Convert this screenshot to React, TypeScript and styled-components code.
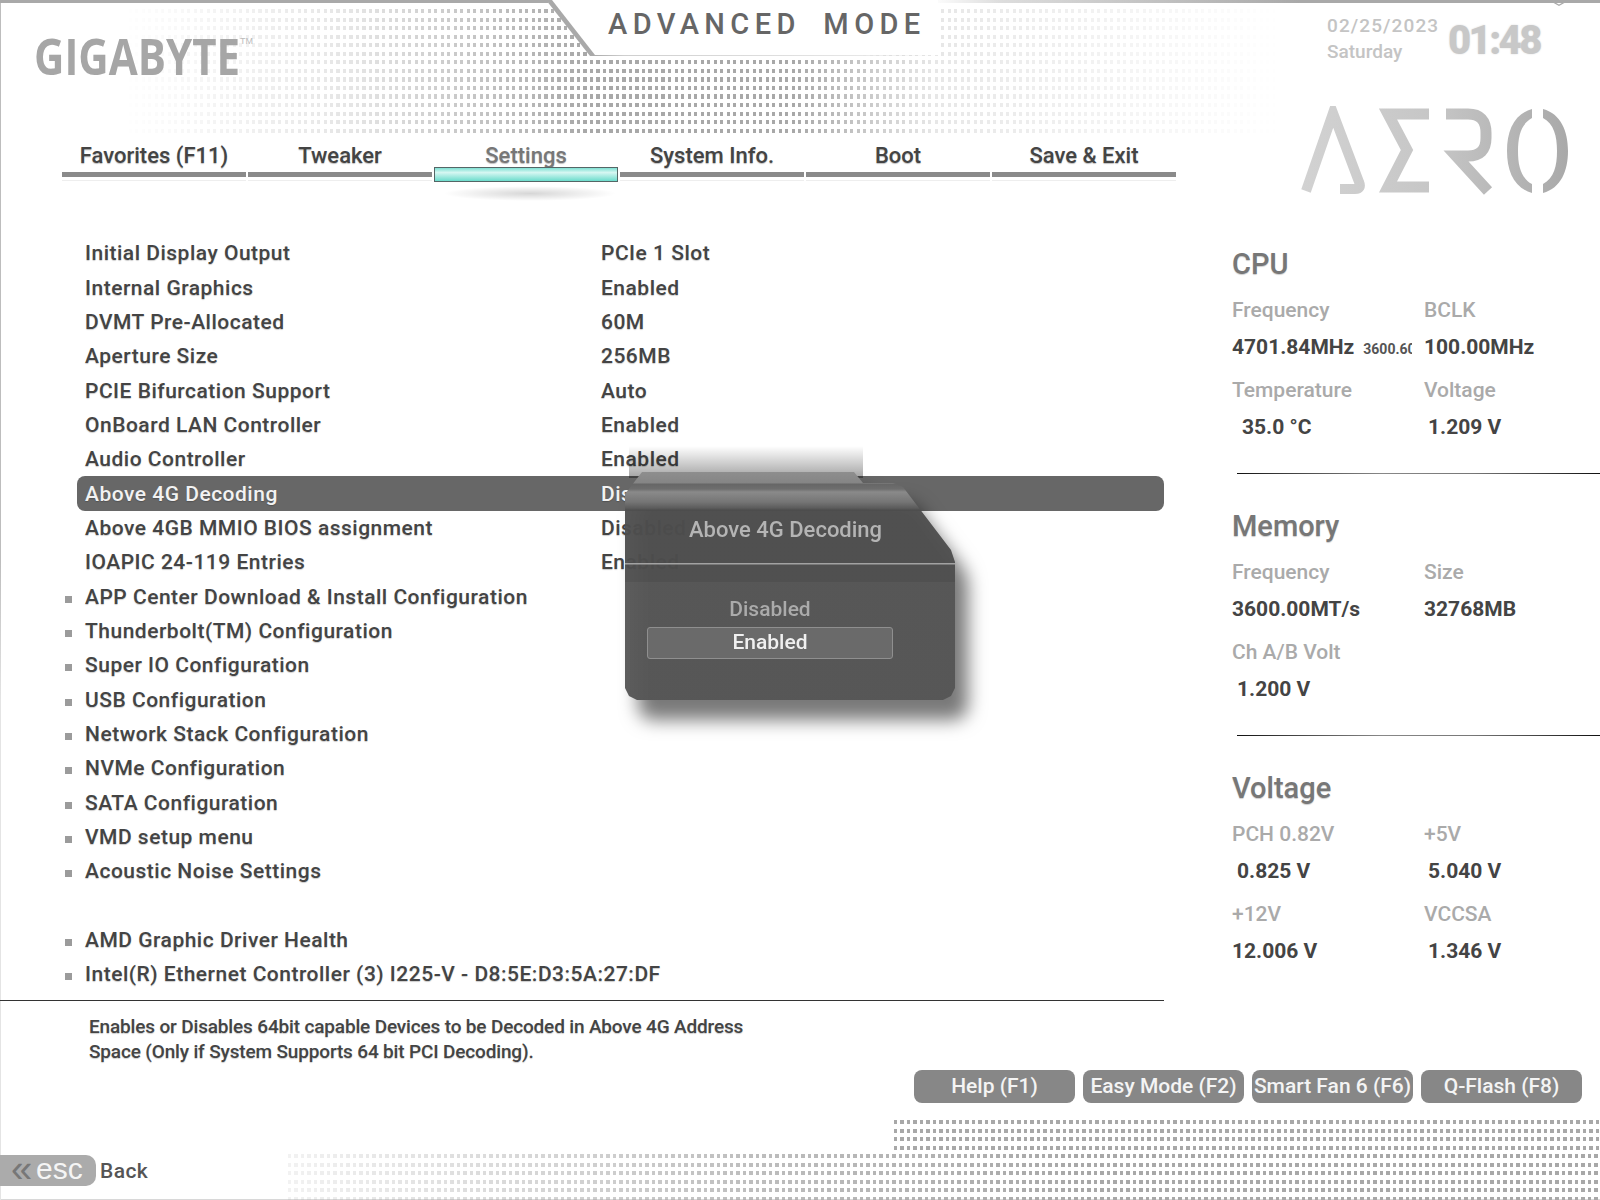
import React from 'react';
import styled, {createGlobalStyle} from 'styled-components';

const TABS = ['Favorites (F11)', 'Tweaker', 'Settings', 'System Info.', 'Boot', 'Save & Exit'];

const ROWS = [
    {label: 'Initial Display Output', value: 'PCIe 1 Slot'},
    {label: 'Internal Graphics', value: 'Enabled'},
    {label: 'DVMT Pre-Allocated', value: '60M'},
    {label: 'Aperture Size', value: '256MB'},
    {label: 'PCIE Bifurcation Support', value: 'Auto'},
    {label: 'OnBoard LAN Controller', value: 'Enabled'},
    {label: 'Audio Controller', value: 'Enabled'},
    {label: 'Above 4G Decoding', value: 'Disabled', active: true},
    {label: 'Above 4GB MMIO BIOS assignment', value: 'Disabled'},
    {label: 'IOAPIC 24-119 Entries', value: 'Enabled'},
    {label: 'APP Center Download & Install Configuration', sub: true},
    {label: 'Thunderbolt(TM) Configuration', sub: true},
    {label: 'Super IO Configuration', sub: true},
    {label: 'USB Configuration', sub: true},
    {label: 'Network Stack Configuration', sub: true},
    {label: 'NVMe Configuration', sub: true},
    {label: 'SATA Configuration', sub: true},
    {label: 'VMD setup menu', sub: true},
    {label: 'Acoustic Noise Settings', sub: true},
    {label: ''},
    {label: 'AMD Graphic Driver Health', sub: true},
    {label: 'Intel(R) Ethernet Controller (3) I225-V - D8:5E:D3:5A:27:DF', sub: true},
];

type Stat = {label: string, value: string, indent?: number, extra?: string};

const SECTIONS: {title: string, stats: Stat[]}[] = [
    {
        title: 'CPU',
        stats: [
            {label: 'Frequency', value: '4701.84MHz', extra: '3600.60'},
            {label: 'BCLK', value: '100.00MHz'},
            {label: 'Temperature', value: '35.0 °C', indent: 10},
            {label: 'Voltage', value: '1.209 V', indent: 4},
        ],
    },
    {
        title: 'Memory',
        stats: [
            {label: 'Frequency', value: '3600.00MT/s'},
            {label: 'Size', value: '32768MB'},
            {label: 'Ch A/B Volt', value: '1.200 V', indent: 5},
        ],
    },
    {
        title: 'Voltage',
        stats: [
            {label: 'PCH 0.82V', value: '0.825 V', indent: 5},
            {label: '+5V', value: '5.040 V', indent: 4},
            {label: '+12V', value: '12.006 V'},
            {label: 'VCCSA', value: '1.346 V', indent: 4},
        ],
    },
];

const BUTTONS = ['Help (F1)', 'Easy Mode (F2)', 'Smart Fan 6 (F6)', 'Q-Flash (F8)'];

function AeroLogo() {
    return (
        <AeroSvg viewBox="0 0 268 90" width="268" height="90">
            <defs>
                <linearGradient id="aeroFill" x1="0" x2="268" y1="0" y2="0" gradientUnits="userSpaceOnUse">
                    <stop offset="0" stopColor="#d2d2d2"/>
                    <stop offset="0.5" stopColor="#c6c6c6"/>
                    <stop offset="1" stopColor="#a9a9a9"/>
                </linearGradient>
            </defs>
            <g fill="none" stroke="url(#aeroFill)" strokeWidth="10">
                <path d="M6 85 L33 7 L59 76 Q62 83 55 83 L40 83"/>
                <path strokeWidth="11" d="M129 8 H88 L107 44 L88 81 H129"/>
                <path strokeWidth="11" d="M146 8 H168 Q186 8 186 27 V32 Q186 50 168 50 H156 L188 85"/>
            </g>
            <path fill="url(#aeroFill)" d="M232 3 C214 8 207 25 207 45 C207 65 214 82 232 87 L232 78 C221 72 218 60 218 45 C218 30 221 18 232 12 Z"/>
            <path fill="url(#aeroFill)" d="M243 3 C261 8 268 25 268 45 C268 65 261 82 243 87 L243 78 C254 72 257 60 257 45 C257 30 254 18 243 12 Z"/>
        </AeroSvg>
    );
}

function DecodingPopup() {
    return (
        <PopupWrap>
            <PopupGlow/>
            <PopupShadow>
                <PopupPanel>
                    <PopupTitle>Above 4G Decoding</PopupTitle>
                    <PopupOption>Disabled</PopupOption>
                    <PopupOption $selected>Enabled</PopupOption>
                </PopupPanel>
            </PopupShadow>
        </PopupWrap>
    );
}

export default function App() {
    return (
        <Page>
            <GlobalStyle/>
            <HeaderDots/>
            <FooterDots/>
            <FooterDotsTall/>
            <CornerMark viewBox="0 0 12 12" width="12" height="12">
                <path d="M6 .8 L10.8 3.4 V8.6 L6 11.2 L1.2 8.6 V3.4 Z" fill="none" stroke="#aaa" strokeWidth="1.2"/>
            </CornerMark>
            <Upper>
                <Main>
                    <LogoRow>
                        <LogoCell>
                            <Logo>GIGABYTE</Logo>
                            <LogoMark>TM</LogoMark>
                        </LogoCell>
                        <TitleNotch><TitleText>ADVANCED MODE</TitleText></TitleNotch>
                    </LogoRow>
                    <Tabs>
                        {TABS.map(tab => (
                            <Tab key={tab}>
                                <TabLabel $active={tab === 'Settings'}>{tab}</TabLabel>
                                <TabBar $active={tab === 'Settings'}/>
                            </Tab>
                        ))}
                    </Tabs>
                    <SettingList>
                        {ROWS.map((row, index) => (
                            <Row key={index} $active={row.active}>
                                <RowLabel>{row.sub && <Bullet/>}{row.label}</RowLabel>
                                <span>{row.value}</span>
                            </Row>
                        ))}
                    </SettingList>
                </Main>
                <Side>
                    <ClockRow>
                        <DateCol>
                            <DateText>02/25/2023</DateText>
                            <span>Saturday</span>
                        </DateCol>
                        <Time>01:48</Time>
                    </ClockRow>
                    <AeroLogo/>
                    {SECTIONS.map(section => (
                        <Section key={section.title}>
                            <SectionTitle>{section.title}</SectionTitle>
                            <StatGrid>
                                {section.stats.map(stat => (
                                    <StatCell key={stat.label}>
                                        <StatLabel>{stat.label}</StatLabel>
                                        <StatValue $indent={stat.indent}>
                                            {stat.value}
                                            {stat.extra && <StatExtra>{stat.extra}</StatExtra>}
                                        </StatValue>
                                    </StatCell>
                                ))}
                            </StatGrid>
                            {section.title !== 'Voltage' && <Divider/>}
                        </Section>
                    ))}
                </Side>
            </Upper>
            <Rule/>
            <HelpText>
                Enables or Disables 64bit capable Devices to be Decoded in Above 4G Address<br/>
                Space (Only if System Supports 64 bit PCI Decoding).
            </HelpText>
            <ButtonRow>
                {BUTTONS.map(label => <ActionButton key={label}>{label}</ActionButton>)}
            </ButtonRow>
            <Footer>
                <EscKey><EscArrows>«</EscArrows>esc</EscKey>
                <BackLabel>Back</BackLabel>
            </Footer>
            <DecodingPopup/>
        </Page>
    );
}

const GlobalStyle = createGlobalStyle`
  html, body {
    margin: 0;
    background: #fff;
  }

  body {
    font-family: Roboto, "Liberation Sans", sans-serif;
  }
`;

// small square dots, cut out of a flat grey; the last layer fades the whole field
const dotField = (fade: string) => `
  background: #a8a8a8;
  mask-image:
    repeating-linear-gradient(to right, #000 0 3.2px, transparent 3.2px 6.5px),
    repeating-linear-gradient(to bottom, #000 0 4.2px, transparent 4.2px 8.55px),
    ${fade};
  mask-composite: intersect;
`;

const Page = styled.div`
  position: relative;
  width: 1600px;
  height: 1200px;
  overflow: hidden;
  background:
    linear-gradient(to right, #a9a9a9 0, #a9a9a9 548px, transparent 548px, transparent 930px, #ddd 1000px, #a9a9a9 1300px) 0 0 / 100% 3px no-repeat,
    linear-gradient(to bottom, #bdbdbd 0, #bdbdbd 560px, #e4e4e4 700px, #e4e4e4 1200px) 0 0 / 1px 100% no-repeat,
    linear-gradient(#d8d8d8, #d8d8d8) 0 100% / 100% 1px no-repeat,
    #fff;
`;

const CornerMark = styled.svg`
  position: absolute;
  left: 1553px;
  top: -6px;
`;

const HeaderDots = styled.div`
  position: absolute;
  left: 122px;
  top: 9px;
  width: 1160px;
  height: 125px;
  ${dotField('linear-gradient(to right, transparent 0, rgba(0, 0, 0, .12) 8%, rgba(0, 0, 0, .3) 20%, #000 40%, #000 58%, rgba(0, 0, 0, .28) 70%, rgba(0, 0, 0, .14) 85%, transparent 100%)')}
`;

const FooterDots = styled.div`
  position: absolute;
  left: 288px;
  top: 1154px;
  width: 1312px;
  height: 46px;
  ${dotField('linear-gradient(to right, rgba(0, 0, 0, .15) 0, rgba(0, 0, 0, .75) 35%, #000 60%)')}
`;

const FooterDotsTall = styled.div`
  position: absolute;
  left: 894px;
  top: 1120px;
  width: 706px;
  height: 34px;
  ${dotField('linear-gradient(#000, #000)')}
`;

const Upper = styled.div`
  position: relative;
  display: grid;
  grid-template-columns: 1190px 1fr;
  height: 1000px;
`;

const Main = styled.div`
  display: flex;
  flex-direction: column;
`;

const LogoRow = styled.div`
  display: flex;
  align-items: flex-start;
  height: 140px;
`;

const LogoCell = styled.div`
  display: flex;
  align-items: flex-start;
  width: 546px;
  padding: 28px 0 0 34px;
  box-sizing: border-box;
`;

const Logo = styled.div`
  width: 204px;
  transform: scaleX(.84);
  transform-origin: left center;
  font-family: "Open Sans", sans-serif;
  font-size: 50px;
  line-height: 56px;
  font-weight: 700;
  color: #a6a6a6;
  white-space: nowrap;
`;

const LogoMark = styled.span`
  margin: 8px 0 0 2px;
  font-family: "Liberation Sans", sans-serif;
  font-size: 9px;
  line-height: 10px;
  color: #bbb;
`;

const TitleNotch = styled.div`
  position: relative;
  width: 392px;
  height: 56px;
  background: linear-gradient(to right, #a9a9a9 0, #a9a9a9 12%, #cfcfcf 20%, #e6e6e6 80%, transparent 100%);
  clip-path: polygon(0 0, 100% 0, 100% 100%, 44px 100%);

  &::after {
    content: '';
    position: absolute;
    inset: 0 0 1px 0;
    background: #fff;
    clip-path: polygon(6px 0, 100% 0, 100% 100%, 49px 100%);
  }
`;

const TitleText = styled.div`
  position: relative;
  z-index: 1;
  padding: 5px 0 0 62px;
  font-size: 29px;
  line-height: 38px;
  letter-spacing: 5.4px;
  word-spacing: 10px;
  font-weight: 500;
  color: #666;
  white-space: nowrap;
`;

const Tabs = styled.div`
  display: grid;
  grid-template-columns: repeat(6, 184px);
  column-gap: 2px;
  margin-left: 62px;
  height: 42px;
`;

const Tab = styled.div`
  display: flex;
  flex-direction: column;
`;

const TabLabel = styled.div<{$active?: boolean}>`
  height: 32px;
  font-size: 22px;
  line-height: 32px;
  font-weight: 500;
  text-align: center;
  color: ${({$active}) => ($active ? '#777' : '#444')};
  text-shadow: 0 1px 1px rgba(0, 0, 0, .25);
`;

const TabBar = styled.div<{$active?: boolean}>`
  position: relative;
  box-sizing: border-box;
  height: ${({$active}) => ($active ? '15px' : '5px')};
  margin-top: ${({$active}) => ($active ? '-5px' : '0')};
  background: ${({$active}) => ($active ? 'linear-gradient(to bottom, #7fe0d3 0, #d6f7f2 35%, #6cdccc 100%)' : '#8a8a8a')};
  border: ${({$active}) => ($active ? '1.5px solid #566' : 'none')};
  box-shadow: ${({$active}) => ($active ? 'none' : '0 3px 0 #fff, 0 4px 0 #eee')};

  &::after {
    content: ${({$active}) => ($active ? "''" : 'none')};
    position: absolute;
    left: 8px;
    right: 0;
    top: 18px;
    height: 15px;
    background: radial-gradient(ellipse at center, rgba(0, 0, 0, .16) 0, transparent 70%);
  }
`;

const SettingList = styled.div`
  display: grid;
  grid-auto-rows: 34.35px;
  margin-top: 54px;
  margin-left: 77px;
  width: 1087px;
`;

const Row = styled.div<{$active?: boolean}>`
  display: grid;
  grid-template-columns: 516px 1fr;
  align-items: center;
  padding-left: 8px;
  border-radius: 8px;
  font-size: 21px;
  letter-spacing: .5px;
  font-weight: 500;
  color: ${({$active}) => ($active ? '#f2f2f2' : '#444')};
  background: ${({$active}) => ($active ? '#676767' : 'transparent')};
  text-shadow: 0 1px 1px rgba(0, 0, 0, .2);
`;

const RowLabel = styled.span`
  white-space: nowrap;
`;

const Bullet = styled.i`
  display: inline-block;
  width: 7px;
  height: 7px;
  margin: 0 13px 0 -20px;
  vertical-align: 1px;
  background: #9b9b9b;
`;

const Side = styled.div`
  display: flex;
  flex-direction: column;
  padding-top: 13px;
`;

const ClockRow = styled.div`
  display: flex;
  height: 50px;
  padding-left: 137px;
  color: #c4c4c4;
`;

const DateCol = styled.div`
  display: flex;
  flex-direction: column;
  width: 121px;
  font-size: 19px;
  line-height: 26px;
  font-weight: 500;
`;

const DateText = styled.span`
  letter-spacing: 1.1px;
`;

const Time = styled.div`
  padding-top: 3px;
  font-size: 40px;
  line-height: 50px;
  font-weight: 900;
  letter-spacing: -2.6px;
  color: #c8c8c8;
  text-shadow: 0 0 2px rgba(0, 0, 0, .15);
`;

const AeroSvg = styled.svg`
  margin: 43px 0 49px 110px;
  flex: none;
`;

const Section = styled.section`
  display: flex;
  flex-direction: column;
  height: 262px;
  padding-left: 42px;
`;

const SectionTitle = styled.h2`
  margin: 0 0 9px;
  height: 36px;
  padding-top: 1px;
  box-sizing: content-box;
  font-size: 29px;
  line-height: 36px;
  font-weight: 500;
  color: #777;
  text-shadow: 0 1px 1px rgba(0, 0, 0, .2);
`;

const StatGrid = styled.div`
  display: grid;
  grid-template-columns: 192px 1fr;
  grid-auto-rows: 76px;
  row-gap: 4px;
  height: 156px;
`;

const StatCell = styled.div`
  display: flex;
  flex-direction: column;
`;

const StatLabel = styled.div`
  height: 38px;
  font-size: 21px;
  line-height: 38px;
  font-weight: 500;
  color: #aaa;
`;

const StatValue = styled.div<{$indent?: number}>`
  display: flex;
  align-items: baseline;
  height: 37px;
  padding-left: ${({$indent}) => $indent ?? 0}px;
  font-size: 21px;
  line-height: 37px;
  font-weight: 700;
  color: #444;
  white-space: nowrap;
`;

const StatExtra = styled.span`
  display: inline-block;
  width: 49px;
  margin-left: 9px;
  overflow: hidden;
  font-size: 14px;
  color: #555;
`;

const Divider = styled.div`
  height: 1px;
  margin: 26px 0 0 5px;
  background: linear-gradient(to right, #111 0, #333 10%, #888 40%, #777 65%, #111 100%);
`;

const Rule = styled.div`
  width: 1164px;
  height: 1px;
  background: #333;
`;

const HelpText = styled.div`
  margin-top: 13px;
  padding-left: 89px;
  font-size: 19px;
  line-height: 25px;
  letter-spacing: -.16px;
  font-weight: 500;
  color: #444;
  text-shadow: 0 1px 1px rgba(0, 0, 0, .2);
`;

const ButtonRow = styled.div`
  position: relative;
  display: flex;
  justify-content: flex-end;
  gap: 8px;
  margin-top: 6px;
  padding-right: 18px;
`;

const ActionButton = styled.div`
  width: 161px;
  height: 33px;
  overflow: hidden;
  border-radius: 8px;
  background: #878787;
  color: #f4f4f4;
  font-size: 21px;
  line-height: 33px;
  font-weight: 500;
  text-align: center;
  white-space: nowrap;
`;

const Footer = styled.div`
  position: relative;
  display: flex;
  align-items: center;
  gap: 4px;
  margin-top: 52px;
`;

const EscKey = styled.div`
  display: flex;
  align-items: center;
  width: 96px;
  height: 31px;
  box-sizing: border-box;
  padding: 0 0 4px 11px;
  border-radius: 0 10px 10px 0;
  background: #ababab;
  color: #f5f5f5;
  font-family: "Liberation Sans", sans-serif;
  font-size: 30px;
  line-height: 26px;
`;

const EscArrows = styled.span`
  width: 25px;
  color: #777;
  font-size: 38px;
  line-height: 26px;
`;

const BackLabel = styled.span`
  font-size: 21px;
  letter-spacing: .4px;
  font-weight: 500;
  color: #555;
`;

const PopupWrap = styled.div`
  position: absolute;
  left: 625px;
  top: 472px;
  width: 330px;
  height: 228px;
`;

const PopupGlow = styled.div`
  position: absolute;
  left: 4px;
  top: -26px;
  width: 234px;
  height: 32px;
  background: linear-gradient(to top, rgba(0, 0, 0, .36), transparent);
`;

const PopupShadow = styled.div`
  position: relative;
  height: 100%;
  filter: drop-shadow(13px 20px 9px rgba(0, 0, 0, .55));
`;

const PopupPanel = styled.div`
  height: 100%;
  box-sizing: border-box;
  padding-top: 39px;
  background:
    linear-gradient(#a2a2a2, #a2a2a2) 0 91px / 100% 1.5px no-repeat,
    linear-gradient(to bottom, #8e8e8e 0, #858585 11px, #666 12px, #6e6e6e 17px, #8a8a8a 20px, #757575 30px, #5c5c5c 36px, rgba(78, 78, 78, .96) 38px, rgba(78, 78, 78, .96) 110px, rgba(85, 85, 85, .96) 110px);
  clip-path: polygon(17px 0, 229px 0, 238px 11px, 268px 11px, 278px 15px, 326px 78px, 330px 90px, 330px 216px, 326px 224px, 318px 228px, 12px 228px, 4px 224px, 0 216px, 0 22px);
`;

const PopupTitle = styled.div`
  height: 38px;
  margin-bottom: 42px;
  padding-left: 64px;
  font-size: 22px;
  line-height: 38px;
  font-weight: 500;
  color: #b4b4b4;
`;

const PopupOption = styled.div<{$selected?: boolean}>`
  box-sizing: border-box;
  width: 246px;
  height: ${({$selected}) => ($selected ? '32px' : '36px')};
  margin-left: 22px;
  border: ${({$selected}) => ($selected ? '1.5px solid #8f8f8f' : 'none')};
  border-radius: 3px;
  background: ${({$selected}) => ($selected ? '#6a6a6a' : 'transparent')};
  color: ${({$selected}) => ($selected ? '#f0f0f0' : '#ababab')};
  font-size: 21px;
  line-height: ${({$selected}) => ($selected ? '29px' : '36px')};
  font-weight: 500;
  text-align: center;
`;
